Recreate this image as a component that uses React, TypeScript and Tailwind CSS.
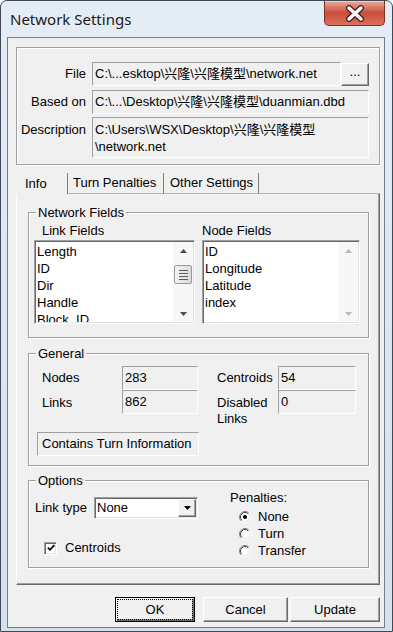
import React from "react";

type Kids = { children?: React.ReactNode; className?: string };

const Tri = ({ dir, color }: { dir: "up" | "down"; color: string }) => (
  <svg width="7" height="4" viewBox="0 0 7 4">
    <path d={dir === "up" ? "M0 4 L3.5 0 L7 4 Z" : "M0 0 L7 0 L3.5 4 Z"} fill={color} />
  </svg>
);

// etched group box, caption sits on the top line
const Group = ({ caption, className = "", children }: Kids & { caption?: string }) => (
  <div className={`border border-[#a0a0a0] shadow-[inset_1px_1px_0_#fff,1px_1px_0_#fff] ${className}`}>
    {caption && (
      <div className="-mt-[8px] ml-[7px] w-fit bg-[#f0f0f0] px-[2px] leading-[15px]">{caption}</div>
    )}
    {children}
  </div>
);

// read-only text box, only top/left edge shows
const Static = ({ className = "", children }: Kids) => (
  <div className={`border border-[#a0a0a0] border-r-white border-b-white ${className}`}>{children}</div>
);

const Sunken = ({ className = "", children }: Kids) => (
  <div
    className={`border border-[#a0a0a0] border-r-white border-b-white bg-white p-[1px] shadow-[inset_1px_1px_0_#696969,inset_-1px_-1px_0_#e3e3e3] ${className}`}
  >
    {children}
  </div>
);

const ScrollBar = ({ enabled }: { enabled: boolean }) => {
  const c = enabled ? "#4a4a4a" : "#b9b9b9";
  return (
    <div className="flex w-[20px] shrink-0 flex-col bg-[#f7f7f7]">
      <div className="flex h-[17px] items-center justify-center">
        <Tri dir="up" color={c} />
      </div>
      {enabled && (
        <div className="mx-[1px] mt-[6px] flex h-[19px] flex-col items-center justify-center gap-[2px] rounded-[2px] border border-[#989898] bg-linear-to-r from-[#f4f4f4] to-[#dadada]">
          <div className="h-px w-[9px] bg-[#5e5e5e]" />
          <div className="h-px w-[9px] bg-[#5e5e5e]" />
          <div className="h-px w-[9px] bg-[#5e5e5e]" />
          <div className="h-px w-[9px] bg-[#5e5e5e]" />
        </div>
      )}
      <div className="flex-1" />
      <div className="flex h-[17px] items-center justify-center">
        <Tri dir="down" color={c} />
      </div>
    </div>
  );
};

const ListBox = ({ items, enabled, className = "" }: { items: string[]; enabled: boolean; className?: string }) => (
  <Sunken className={`flex h-[84px] ${className}`}>
    <div className="flex-1 overflow-hidden pt-[1px] pl-[1px] leading-[17px]">
      {items.map((item) => (
        <div key={item} className="whitespace-nowrap">
          {item}
        </div>
      ))}
    </div>
    <ScrollBar enabled={enabled} />
  </Sunken>
);

const Radio = ({ checked }: { checked?: boolean }) => (
  <svg width="12" height="12" viewBox="0 0 12 12">
    <circle cx="6" cy="6" r="5" fill="#fff" />
    <path d="M2.11 9.89 A5.5 5.5 0 0 1 9.89 2.11" stroke="#808080" fill="none" />
    <path d="M9.89 2.11 A5.5 5.5 0 0 1 2.11 9.89" stroke="#ffffff" fill="none" />
    <path d="M2.82 9.18 A4.5 4.5 0 0 1 9.18 2.82" stroke="#404040" fill="none" />
    <path d="M9.18 2.82 A4.5 4.5 0 0 1 2.82 9.18" stroke="#e3e3e3" fill="none" />
    {checked && <circle cx="6" cy="6" r="2" fill="#000" />}
  </svg>
);

const Button = ({ children, isDefault, className = "" }: Kids & { isDefault?: boolean }) => (
  <div className={`h-[25px] bg-[#f0f0f0] ${isDefault ? "border border-black" : ""} ${className}`}>
    <div className="flex h-full w-full items-center justify-center border border-t-white border-l-white border-r-[#696969] border-b-[#696969] shadow-[inset_-1px_-1px_0_#a0a0a0]">
      {isDefault ? (
        <div className="flex h-full w-full items-center justify-center border border-dotted border-black">{children}</div>
      ) : (
        children
      )}
    </div>
  </div>
);

const CloseButton = () => (
  <div className="ml-auto flex h-[25px] w-[61px] items-center justify-center rounded-b-[5px] border border-t-0 border-[#7b2f25] bg-linear-to-b from-[#eaa99c] via-[#c94c3b] to-[#d9735c] shadow-[inset_0_1px_0_rgba(255,255,255,0.45)]">
    <svg width="22" height="17" viewBox="0 0 22 17">
      <path d="M5 3 L17 14 M17 3 L5 14" stroke="#4a1f19" strokeWidth="6" strokeLinecap="round" />
      <path d="M5 3 L17 14 M17 3 L5 14" stroke="#ffffff" strokeWidth="3.5" strokeLinecap="round" />
    </svg>
  </div>
);

export default function App() {
  return (
    <div className="h-[632px] w-[393px] overflow-hidden bg-white font-['Liberation_Sans','Noto_Sans_CJK_SC',sans-serif] text-[13px] text-black">
      <div className="flex h-[632px] flex-col rounded-t-[7px] border border-[#3f4a56] bg-linear-to-b from-[#e4edf6] to-[#d4e0ec] pr-[7px] pb-[3px] pl-[6px]">
        {/* Title bar */}
        <div className="flex h-[36px] shrink-0 items-start">
          <span className="mt-[8px] ml-[3px] font-['Noto_Sans',sans-serif] text-[15px] leading-[20px] text-[#1a1a1a]">
            Network Settings
          </span>
          <CloseButton />
        </div>

        {/* Client area */}
        <div className="flex flex-1 flex-col border border-[#6f7f8f] bg-[#f0f0f0]">
          {/* File info */}
          <Group className="mt-[9px] ml-[8px] w-[364px] pt-[14px] pb-[6px]">
            <div className="flex h-[24px] items-center">
              <div className="w-[69px] text-right">File</div>
              <Static className="ml-[6px] flex h-[24px] w-[249px] items-center pl-[2px] whitespace-nowrap">
                C:\...esktop\兴隆\兴隆模型\network.net
              </Static>
              <div className="flex h-[23px] w-[28px] items-center justify-center border border-t-white border-l-white border-r-[#696969] border-b-[#696969] pb-[4px] shadow-[inset_-1px_-1px_0_#a0a0a0]">
                ...
              </div>
            </div>
            <div className="mt-[4px] flex h-[24px] items-center">
              <div className="w-[69px] text-right">Based on</div>
              <Static className="ml-[6px] flex h-[24px] w-[277px] items-center pl-[2px] whitespace-nowrap">
                C:\...\Desktop\兴隆\兴隆模型\duanmian.dbd
              </Static>
            </div>
            <div className="mt-[3px] flex items-start">
              <div className="w-[69px] pt-[4px] text-right leading-[17px]">Description</div>
              <Static className="ml-[6px] h-[41px] w-[277px] pt-[3px] pl-[2px] leading-[17px]">
                <div>C:\Users\WSX\Desktop\兴隆\兴隆模型</div>
                <div>\network.net</div>
              </Static>
            </div>
          </Group>

          {/* Tabs */}
          <div className="mt-[8px] ml-[8px] flex h-[21px] w-[364px]">
            <div className="flex w-[52px] items-center border-r border-[#7d7d7d] pl-[9px]">Info</div>
            <div className="flex w-[96px] items-center border-r border-b border-r-[#7d7d7d] border-b-[#b4b4b4] pl-[5px]">
              Turn Penalties
            </div>
            <div className="flex w-[95px] items-center border-r border-b border-r-[#7d7d7d] border-b-[#b4b4b4] pl-[6px]">
              Other Settings
            </div>
            <div className="flex-1 border-b border-[#b4b4b4]" />
          </div>

          {/* Tab panel */}
          <div className="ml-[8px] w-[364px] border-r border-b border-l border-r-[#696969] border-b-[#696969] border-l-white pb-[16px] shadow-[inset_-1px_-1px_0_#a0a0a0]">
            <Group caption="Network Fields" className="mt-[18px] ml-[11px] w-[341px]">
              <div className="mt-[3px] flex pb-[13px] pl-[5px]">
                <div className="flex w-[161px] flex-col">
                  <div className="pl-[8px] leading-[15px]">Link Fields</div>
                  <ListBox
                    className="mt-[2px] w-[161px]"
                    enabled
                    items={["Length", "ID", "Dir", "Handle", "Block_ID"]}
                  />
                </div>
                <div className="ml-[7px] flex w-[158px] flex-col">
                  <div className="leading-[15px]">Node Fields</div>
                  <ListBox
                    className="mt-[2px] w-[158px]"
                    enabled={false}
                    items={["ID", "Longitude", "Latitude", "index"]}
                  />
                </div>
              </div>
            </Group>

            <Group caption="General" className="mt-[15px] ml-[11px] w-[341px] pb-[9px]">
              <div className="mt-[5px] pl-[13px]">
                <div className="flex h-[24px] items-center">
                  <div className="w-[80px]">Nodes</div>
                  <Static className="flex h-[24px] w-[76px] items-center pl-[2px]">283</Static>
                  <div className="ml-[19px] w-[61px]">Centroids</div>
                  <Static className="flex h-[24px] w-[78px] items-center pl-[2px]">54</Static>
                </div>
                <div className="flex items-start">
                  <div className="w-[80px] pt-[5px] leading-[16px]">Links</div>
                  <Static className="flex h-[24px] w-[76px] items-center pl-[2px]">862</Static>
                  <div className="ml-[19px] w-[61px] pt-[5px] leading-[16px]">
                    Disabled
                    <br />
                    Links
                  </div>
                  <Static className="flex h-[24px] w-[78px] items-center pl-[2px]">0</Static>
                </div>
              </div>
              <Static className="mt-[5px] ml-[8px] flex h-[24px] w-[162px] items-center pl-[4px]">
                Contains Turn Information
              </Static>
            </Group>

            <Group caption="Options" className="mt-[14px] ml-[11px] w-[341px] pb-[8px]">
              <div className="flex items-start">
                <div className="w-[201px] pl-[6px]">
                  <div className="mt-[9px] flex items-center">
                    <div className="w-[59px]">Link type</div>
                    <Sunken className="flex h-[22px] w-[104px]">
                      <div className="flex flex-1 items-center pl-[1px]">None</div>
                      <div className="flex h-full w-[18px] items-center justify-center border border-t-white border-l-white border-r-[#696969] border-b-[#696969] bg-[#f0f0f0] shadow-[inset_-1px_-1px_0_#a0a0a0]">
                        <Tri dir="down" color="#000" />
                      </div>
                    </Sunken>
                  </div>
                  <div className="mt-[21px] flex h-[16px] items-center pl-[9px]">
                    <Sunken className="flex h-[13px] w-[13px] items-center justify-center p-0">
                      <svg width="8" height="8" viewBox="0 0 8 8">
                        <path d="M0.8 3.6 L3 5.8 L7.4 1.2" stroke="#000" strokeWidth="1.7" fill="none" />
                      </svg>
                    </Sunken>
                    <span className="ml-[8px]">Centroids</span>
                  </div>
                </div>
                <div className="flex flex-col">
                  <div className="mt-[2px] leading-[16px]">Penalties:</div>
                  <div className="mt-[2px] flex flex-col">
                    <div className="flex h-[17px] items-center pl-[9px]">
                      <Radio checked />
                      <span className="ml-[7px]">None</span>
                    </div>
                    <div className="flex h-[17px] items-center pl-[9px]">
                      <Radio />
                      <span className="ml-[7px]">Turn</span>
                    </div>
                    <div className="flex h-[17px] items-center pl-[9px]">
                      <Radio />
                      <span className="ml-[7px]">Transfer</span>
                    </div>
                  </div>
                </div>
              </div>
            </Group>
          </div>

          {/* Dialog buttons */}
          <div className="mt-[12px] flex pl-[107px]">
            <Button isDefault className="w-[80px]">
              OK
            </Button>
            <Button className="ml-[8px] w-[85px]">Cancel</Button>
            <Button className="ml-[2px] w-[90px]">Update</Button>
          </div>
        </div>
      </div>
    </div>
  );
}
